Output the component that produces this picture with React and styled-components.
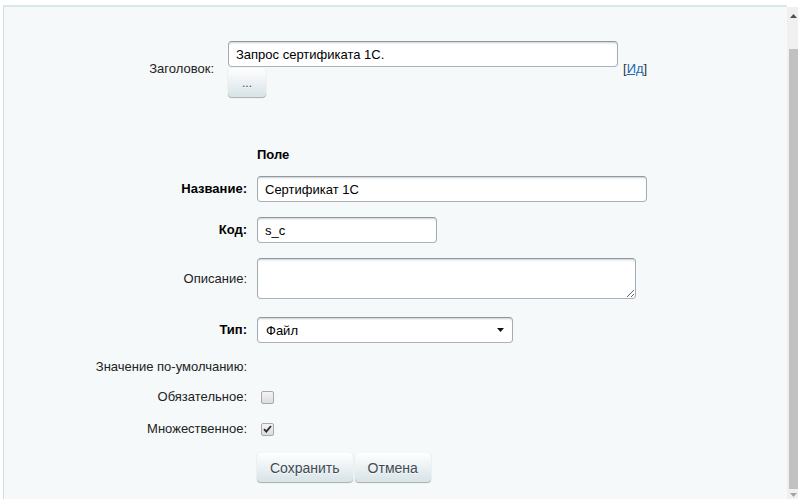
import React from "react";
import styled, { createGlobalStyle } from "styled-components";

const Global = createGlobalStyle`
  html, body {
    margin: 0;
    padding: 0;
    background: #fff;
    overflow: hidden;
  }
  body {
    font-family: "Liberation Sans", Arial, sans-serif;
    font-size: 13px;
    color: #222;
  }
`;

const Page = styled.div`
  display: flex;
  height: 499px;
  width: 798px;
  padding: 5px 0 0 3px;
  box-sizing: border-box;
  overflow: hidden;
`;

const Frame = styled.div`
  flex: 1;
  display: flex;
  flex-direction: column;
  background: #f5f9f9;
  border-top: 2px solid #dbe7e7;
  border-left: 1px solid #d6dddf;
`;

const Content = styled.div`
  flex: 1;
  padding-top: 34px;
`;

/* ---------- title row ---------- */

const TitleRow = styled.div`
  display: flex;
  align-items: center;
`;

const TitleLabel = styled.div`
  width: 210px;
  text-align: right;
  line-height: 16px;
  margin-right: 14px;
`;

const Stack = styled.div`
  display: flex;
  flex-direction: column;
  gap: 1px;
`;

const IdLink = styled.span`
  margin-left: 5px;
  line-height: 16px;
  color: #333;

  a {
    color: #2067b0;
    text-decoration: underline;
  }
`;

/* ---------- fields ---------- */

const SectionHead = styled.div`
  margin: 50px 0 0 253px;
  line-height: 16px;
  font-weight: bold;
  color: #000;
`;

const FieldRow = styled.div`
  display: flex;
  align-items: center;
  gap: 10px;
  margin-top: ${(p) => p.$mt}px;
  min-height: ${(p) => p.$h || 0}px;
`;

const Label = styled.div`
  width: 243px;
  text-align: right;
  line-height: 16px;
  font-weight: ${(p) => (p.$bold ? "bold" : "normal")};
  color: ${(p) => (p.$bold ? "#000" : "#222")};
`;

const fieldBox = `
  box-sizing: border-box;
  background: #fff;
  border: 1px solid;
  border-color: #8f98a1 #a3abb3 #aab1b8 #a3abb3;
  border-radius: 4px;
  box-shadow: inset 0 2px 2px -1px rgba(180, 188, 191, 0.7);
  font-family: "Liberation Sans", Arial, sans-serif;
  font-size: 13px;
  color: #000;
  outline: none;
  margin: 0;
`;

const TextInput = styled.input`
  ${fieldBox}
  width: ${(p) => p.$w}px;
  height: 26px;
  padding: 0 7px;
`;

const TextArea = styled.textarea`
  ${fieldBox}
  display: block;
  width: 379px;
  height: 41px;
  padding: 4px 7px;
  resize: both;
`;

const SelectBox = styled.div`
  ${fieldBox}
  width: 256px;
  height: 26px;
  padding: 0 8px 0 8px;
  display: flex;
  align-items: center;
  justify-content: space-between;
`;

const Btn = styled.button`
  height: 29px;
  padding: 0 13px;
  border: none;
  border-radius: 4px;
  background-color: #e0e9ec;
  background-image: linear-gradient(to top, #d7e3e7, #fff);
  box-shadow: 0 0 1px rgba(0, 0, 0, 0.11), 0 1px 1px rgba(0, 0, 0, 0.3),
    inset 0 1px #fff, inset 0 0 1px rgba(255, 255, 255, 0.5);
  font-family: "Liberation Sans", Arial, sans-serif;
  font-size: 14px;
  color: #3f4b54;
  text-shadow: 0 1px rgba(255, 255, 255, 0.7);
  cursor: pointer;
`;

const DotsBtn = styled(Btn)`
  width: 38px;
  padding: 0;
  font-size: 12px;
  line-height: 20px;
`;

const ButtonBar = styled.div`
  display: flex;
  gap: 2px;
  margin: 14px 0 0 253px;
`;

const Check = styled.span`
  display: inline-flex;
  align-items: center;
  justify-content: center;
  width: 13px;
  height: 13px;
  margin-left: 4px;
  box-sizing: border-box;
  border: 1px solid #a9a9a9;
  border-radius: 2px;
  background: linear-gradient(#f4f4f4, #dcdcdc);
`;

/* ---------- scrollbar ---------- */

const Scrollbar = styled.div`
  width: 11px;
  margin-top: 2px;
  background: #f0f0f0;
  display: flex;
  flex-direction: column;
`;

const Arrow = styled.div`
  height: ${(p) => p.$h}px;
  display: flex;
  align-items: ${(p) => (p.$down ? "flex-start" : "center")};
  justify-content: flex-end;
  padding-right: 1px;
  padding-top: ${(p) => (p.$down ? 4 : 0)}px;
  box-sizing: border-box;
`;

const Thumb = styled.div`
  flex: 1;
  margin: 25px 0 0 2px;
  background: #c1c1c1;
`;

const Triangle = ({ down, color }) => (
  <svg width="7" height="4" viewBox="0 0 7 4">
    <path d={down ? "M0 0H7L3.5 4Z" : "M0 4H7L3.5 0Z"} fill={color} />
  </svg>
);

const CheckBox = ({ checked }) => (
  <Check>
    {checked && (
      <svg width="9" height="8" viewBox="0 0 9 8">
        <path d="M1 4.2L3.3 6.6L8 1" stroke="#2a2a2a" strokeWidth="1.8" fill="none" />
      </svg>
    )}
  </Check>
);

export default function App() {
  return (
    <>
      <Global />
      <Page>
        <Frame>
          <Content>
            <TitleRow>
              <TitleLabel>Заголовок:</TitleLabel>
              <Stack>
                <TextInput $w={390} defaultValue="Запрос сертификата 1С." />
                <div>
                  <DotsBtn>...</DotsBtn>
                </div>
              </Stack>
              <IdLink>
                [<a href="#id">Ид</a>]
              </IdLink>
            </TitleRow>

            <SectionHead>Поле</SectionHead>

            <FieldRow $mt={13}>
              <Label $bold>Название:</Label>
              <TextInput $w={390} defaultValue="Сертификат 1С" />
            </FieldRow>
            <FieldRow $mt={15}>
              <Label $bold>Код:</Label>
              <TextInput $w={180} defaultValue="s_c" />
            </FieldRow>
            <FieldRow $mt={15}>
              <Label>Описание:</Label>
              <TextArea defaultValue="" />
            </FieldRow>
            <FieldRow $mt={18}>
              <Label $bold>Тип:</Label>
              <SelectBox>
                <span>Файл</span>
                <Triangle down color="#111" />
              </SelectBox>
            </FieldRow>
            <FieldRow $mt={14} $h={20}>
              <Label>Значение по-умолчанию:</Label>
            </FieldRow>
            <FieldRow $mt={10} $h={20}>
              <Label>Обязательное:</Label>
              <CheckBox />
            </FieldRow>
            <FieldRow $mt={12} $h={20}>
              <Label>Множественное:</Label>
              <CheckBox checked />
            </FieldRow>

            <ButtonBar>
              <Btn>Сохранить</Btn>
              <Btn>Отмена</Btn>
            </ButtonBar>
          </Content>
        </Frame>
        <Scrollbar>
          <Arrow $h={17}>
            <Triangle color="#505050" />
          </Arrow>
          <Thumb />
          <Arrow $h={10} $down>
            <Triangle down color="#a3a3a3" />
          </Arrow>
        </Scrollbar>
      </Page>
    </>
  );
}
